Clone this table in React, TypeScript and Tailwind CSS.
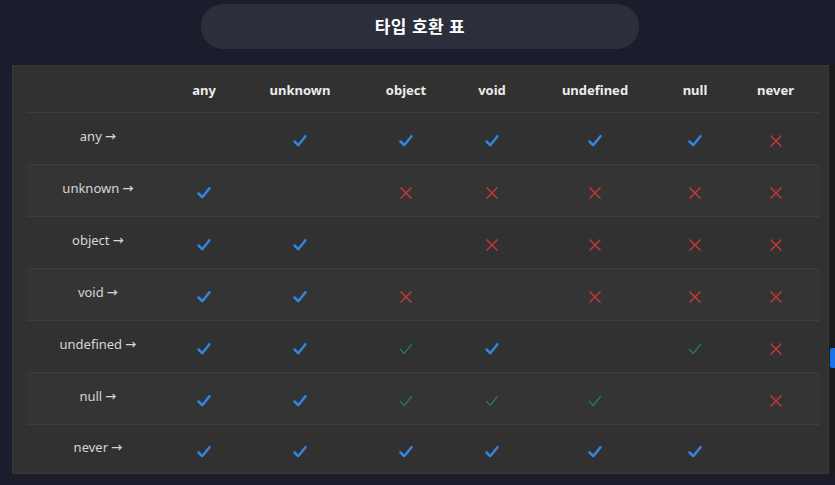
import React from 'react';

type Mark = 'y' | 'g' | 'n' | '';

const cols = ['any', 'unknown', 'object', 'void', 'undefined', 'null', 'never'];

const rows: { label: string; cells: Mark[] }[] = [
  { label: 'any', cells: ['', 'y', 'y', 'y', 'y', 'y', 'n'] },
  { label: 'unknown', cells: ['y', '', 'n', 'n', 'n', 'n', 'n'] },
  { label: 'object', cells: ['y', 'y', '', 'n', 'n', 'n', 'n'] },
  { label: 'void', cells: ['y', 'y', 'n', '', 'n', 'n', 'n'] },
  { label: 'undefined', cells: ['y', 'y', 'g', 'y', '', 'g', 'n'] },
  { label: 'null', cells: ['y', 'y', 'g', 'g', 'g', '', 'n'] },
  { label: 'never', cells: ['y', 'y', 'y', 'y', 'y', 'y', ''] },
];

const grid = 'grid grid-cols-[140px_74px_118px_94px_78px_128px_72px_89px]';

const Icon = ({ mark }: { mark: Mark }) => {
  if (mark === 'y')
    return (
      <svg width="16" height="16" viewBox="0 0 16 16" className="mt-[4px]">
        <path d="M2.5 8.5 L6.2 12.2 L13.5 3.2" fill="none" stroke="#3584dc" strokeWidth="2.6" strokeLinecap="round" strokeLinejoin="round" />
      </svg>
    );
  if (mark === 'g')
    return (
      <svg width="16" height="16" viewBox="0 0 16 16" className="mt-[4px]">
        <path d="M2.5 8.5 L6.2 12.5 L13.5 3.5" fill="none" stroke="#1f7a55" strokeWidth="1.4" strokeLinecap="round" strokeLinejoin="round" />
      </svg>
    );
  if (mark === 'n')
    return (
      <svg width="16" height="16" viewBox="0 0 16 16" className="mt-[4px]">
        <path d="M2.5 2.5 L13.5 13.5 M13.5 2.5 L2.5 13.5" fill="none" stroke="#c2383c" strokeWidth="1.5" />
      </svg>
    );
  return null;
};

export default function App() {
  return (
    <div
      className="relative w-[835px] h-[485px] bg-[#1b1d2c] overflow-hidden"
      style={{ fontFamily: '"Noto Sans", "Noto Sans CJK KR", sans-serif' }}
    >
      <div className="flex justify-center pt-[4px] pl-[5px]">
        <div className="w-[438px] h-[45px] rounded-[22px] bg-[#2c2f3b] flex items-center justify-center">
          <span className="text-white text-[17px] font-bold tracking-[0.5px]">타입 호환 표</span>
        </div>
      </div>

      <div className="flex mt-[16px]">
        <div className="ml-[12px] w-[817px] h-[409px] bg-[#313131] border border-[#383838] pl-[14px] pr-[8px]">
          <div className={`${grid} h-[47px] items-center border-b border-[#3d3d3d] pt-[3px]`}>
            <div />
            {cols.map((c) => (
              <div key={c} className="text-center text-[13px] font-bold text-[#ececec]">
                {c}
              </div>
            ))}
          </div>
          {rows.map((r, i) => (
            <div
              key={r.label}
              className={`${grid} ${i < rows.length - 1 ? 'h-[52px] border-b border-[#3d3d3d]' : 'h-[50px]'} items-center ${
                i % 2 === 1 ? 'bg-[#343434]' : ''
              }`}
            >
              <div className="text-center text-[13px] text-[#d6d6d6] -mt-[4px] pl-[2px]">
                {r.label} <span className="text-[11px] font-bold" style={{ fontFamily: '"Noto Sans CJK KR", sans-serif' }}>→</span>
              </div>
              {r.cells.map((m, j) => (
                <div key={j} className="flex justify-center">
                  <Icon mark={m} />
                </div>
              ))}
            </div>
          ))}
        </div>
        <div className="w-[6px] h-[409px] bg-[#1c1c1c]" />
      </div>

      <div className="absolute left-[830px] top-[348px] w-[5px] h-[20px] bg-[#1a73e8] rounded-l-[2px]" />
    </div>
  );
}
